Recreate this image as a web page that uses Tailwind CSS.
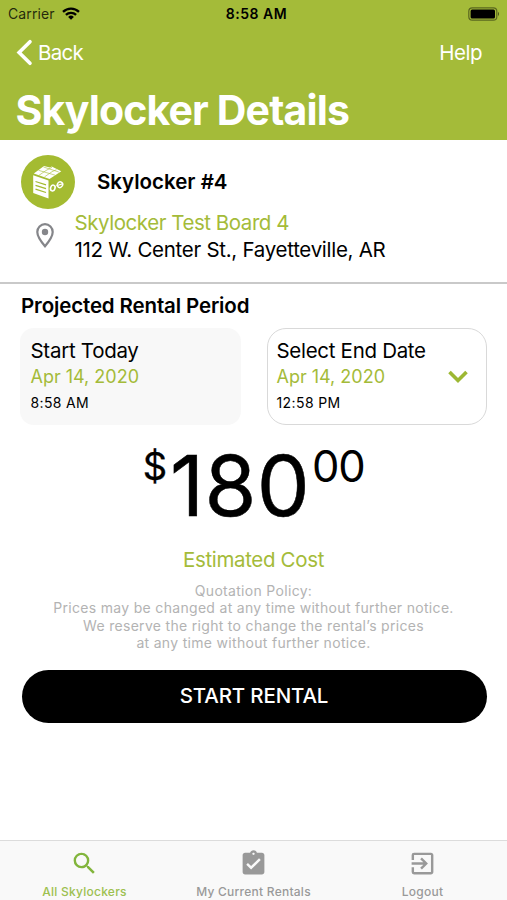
<!DOCTYPE html>
<html lang="en">
<head>
<meta charset="utf-8">
<title>Skylocker Details</title>
<script src="https://cdn.jsdelivr.net/npm/@tailwindcss/browser@4"></script>
</head>
<body class="w-[507px] h-[900px] overflow-hidden bg-white font-['Inter','Liberation_Sans',sans-serif] text-black flex flex-col whitespace-nowrap">
<header class="h-[140px] shrink-0 bg-[#a4bb39] flex flex-col">
  <div class="h-7 shrink-0 grid grid-cols-3 items-center pl-2 pr-[7px]">
    <div class="flex items-center gap-[7px]">
      <span class="text-[14px] leading-7 tracking-[0.1px] text-black/80">Carrier</span>
      <svg class="-mt-[2px]" width="18" height="13" viewBox="0 0 18 13"><g fill="none" stroke="#000" stroke-width="2.3"><path d="M1 4.8a11.5 11.5 0 0 1 16 0"/><path d="M3.9 7.9a7.3 7.3 0 0 1 10.2 0"/></g><path d="M9 12.8 6.1 9.9a4.2 4.2 0 0 1 5.8 0z"/></svg>
    </div>
    <span class="pl-[5px] text-center text-[14px] leading-7 font-semibold tracking-[0.5px]">8:58 AM</span>
    <svg class="justify-self-end -mt-px" width="32" height="14" viewBox="0 0 32 14"><rect x=".8" y=".8" width="28" height="12.4" rx="3.5" fill="none" stroke="#000" stroke-opacity=".45" stroke-width="1.2"/><rect x="2.6" y="2.6" width="24.4" height="8.8" rx="1.5"/><path d="M30 4.8q1.9 2.2 0 4.400z" fill-opacity=".6"/></svg>
  </div>
  <div class="h-[49px] shrink-0 flex items-center justify-between pl-[16px] pr-[25px] text-[20.5px] text-white">
    <div class="flex items-center gap-[5px]">
      <svg width="17" height="27" viewBox="0 0 17 27" fill="none" stroke="#fff" stroke-width="3.6" stroke-linecap="round" stroke-linejoin="miter"><path d="M14 2.700 3.100 13.500 14 24.300"/></svg>
      <span class="pt-[2px] tracking-[-0.7px]">Back</span>
    </div>
    <span class="pt-[2px] tracking-[-0.5px]">Help</span>
  </div>
  <h1 class="shrink-0 pl-[15.500px] pt-[3px] text-[41px] leading-[60px] font-bold text-white tracking-[-0.85px]">Skylocker Details</h1>
</header>
<section class="h-[143.5px] shrink-0 border-b-2 border-[#c9c9c9] pt-[15px] pl-[20.5px]">
  <div class="flex items-center">
    <svg width="54" height="54" viewBox="0 0 54 54"><circle cx="27" cy="27" r="27" fill="#a4bb31"/><g fill="#fff"><path d="M12.200 20.300 27.500 25.500V43.500L12.200 38z"/><path d="M12.800 18.500 23 11l6 1.500 1.700-.9 9.600 4.600L28.500 24z"/></g><g stroke="#a4bb31" fill="none"><path d="m14.500 26.500 10.500 3.400M14.500 30.300l10.500 3.400M14.500 34.100l10.500 3.400" stroke-width="1.300"/><path d="m17.500 15.300 16.400 4.800M22.500 12l15.300 5M18 20.300l7-4.800 6-3.200M23.500 21.900l7.500-5.200 4.500-2" stroke-width=".6"/></g><g fill="none" stroke="#fff"><ellipse cx="31.800" cy="33" rx="2.200" ry="3" stroke-width="1.600" transform="rotate(18 31.800 33)"/><ellipse cx="39" cy="29.700" rx="2.600" ry="2.900" stroke-width="1.400" transform="rotate(35 39 29.700)"/><path d="m35.500 30.800 6.600-2.200" stroke-width="1.200"/></g></svg>
    <h2 class="ml-[22.500px] pt-px text-[20.5px] font-semibold">Skylocker #4</h2>
  </div>
  <div class="flex">
    <svg class="ml-[15.500px] mt-[14px] shrink-0" width="18" height="25" viewBox="0 0 18 25"><path d="M9 1.200a7.700 7.700 0 0 0-7.700 7.700C1.300 14 9 23.200 9 23.200S16.700 14 16.700 8.900A7.700 7.700 0 0 0 9 1.200z" fill="none" stroke="#85868a" stroke-width="2.200"/><circle cx="9" cy="9" r="3.200" fill="#85868a"/></svg>
    <div class="ml-[20.500px] text-[20.5px] leading-[27px]">
      <p class="text-[#a4bb39] tracking-[-0.45px]"><span>Skylocker Test Board 4</span></p>
      <p class="tracking-[-0.28px]"><span>112 W. Center St., Fayetteville, AR</span></p>
    </div>
  </div>
</section>
<main class="grow px-5">
  <h3 class="pl-px pt-[7px] text-[20.5px] leading-[30px] font-semibold tracking-[-0.14px]"><span>Projected Rental Period</span></h3>
  <div class="mt-[7.5px] flex justify-between">
    <div class="w-[221px] h-[97px] rounded-[14px] bg-[#f8f8f8] pl-[10.500px] pt-[10px]">
      <p class="text-[20.5px] leading-[26px] tracking-[-0.28px]"><span>Start Today</span></p>
      <p class="text-[18px] leading-[26px] text-[#a4bb39]"><span>Apr 14, 2020</span></p>
      <p class="text-[14px] leading-[26px] tracking-[0.35px]"><span>8:58 AM</span></p>
    </div>
    <div class="w-[220.500px] h-[97px] rounded-[19px] border-[1.5px] border-[#d9d9d9] pl-[9px] pt-[9px] flex justify-between pr-[18px]">
      <div>
        <p class="text-[20.5px] leading-[26px] tracking-[-0.3px]"><span>Select End Date</span></p>
        <p class="text-[18px] leading-[26px] text-[#a4bb39]"><span>Apr 14, 2020</span></p>
        <p class="text-[14px] leading-[26px] tracking-[0.4px]"><span>12:58 PM</span></p>
      </div>
      <svg class="mt-[32px]" width="20" height="14" viewBox="0 0 20 14" fill="none" stroke="#9db833" stroke-width="3.600"><path d="m1.500 2 8.500 8.500L18.500 2"/></svg>
    </div>
  </div>
  <div class="flex justify-center h-[110px] pt-[16px]">
    <span class="text-[38px] leading-[50px] [-webkit-text-stroke:0.3px_#000]">$</span>
    <span class="ml-[3px] text-[84px] leading-[90px] tracking-[0.300px] [-webkit-text-stroke:0.5px_#000]">180</span>
    <span class="ml-[2px] text-[43.500px] leading-[50px] tracking-[-1.300px]">00</span>
  </div>
  <p class="mt-[10px] text-center text-[20.5px] leading-[30px] text-[#a4bb39] tracking-[-0.34px]"><span>Estimated Cost</span></p>
  <div class="mt-[7px] text-center text-[14px] leading-[17.4px] tracking-[0.31px] text-[#b3b3b3]">
    <p><span>Quotation Policy:</span></p>
    <p><span>Prices may be changed at any time without further notice.</span></p>
    <p><span>We reserve the right to change the rental’s prices</span></p>
    <p><span>at any time without further notice.</span></p>
  </div>
  <button class="mt-[18px] ml-[1.500px] block w-[465px] h-[53px] rounded-full bg-black text-white text-[20.5px] font-medium pt-px tracking-[-0.15px]"><span>START RENTAL</span></button>
</main>
<nav class="h-[60px] shrink-0 border-t border-[#dcdcdc] bg-[#f9f9f9] grid grid-cols-3 text-[12px] font-medium tracking-[0.25px] text-[#999]">
  <div class="flex flex-col items-center pt-[8px] text-[#9dc050]">
    <svg width="29" height="29" viewBox="0 0 24 24" fill="#82b53c"><path d="M15.500 14h-.79l-.28-.27A6.470 6.470 0 0 0 16 9.500 6.500 6.500 0 1 0 9.500 16c1.610 0 3.090-.59 4.230-1.570l.27.28v.79l5 4.990L20.490 19l-4.990-5zm-6 0C7.010 14 5 11.990 5 9.500S7.010 5 9.500 5 14 7.010 14 9.500 11.990 14 9.500 14z"/></svg>
    <span class="mt-[6px] leading-4">All Skylockers</span>
  </div>
  <div class="flex flex-col items-center pt-[8px]">
    <svg width="29" height="29" viewBox="0 0 24 24" fill="#999"><path d="M19 3h-4.180C14.400 1.840 13.300 1 12 1c-1.300 0-2.400.84-2.820 2H5c-1.100 0-2 .9-2 2v14c0 1.100.9 2 2 2h14c1.100 0 2-.9 2-2V5c0-1.100-.9-2-2-2zm-7 0c.55 0 1 .45 1 1s-.45 1-1 1-1-.45-1-1 .45-1 1-1zm-2 14-4-4 1.410-1.410L10 14.170l6.590-6.590L18 9l-8 8z"/></svg>
    <span class="mt-[6px] leading-4">My Current Rentals</span>
  </div>
  <div class="flex flex-col items-center pt-[8px]">
    <svg width="29" height="29" viewBox="0 0 24 24" fill="#999"><path d="M10.090 15.590 11.500 17l5-5-5-5-1.410 1.410L12.670 11H3v2h9.670l-2.580 2.590zM19 3H5a2 2 0 0 0-2 2v4h2V5h14v14H5v-4H3v4a2 2 0 0 0 2 2h14c1.100 0 2-.9 2-2V5c0-1.100-.9-2-2-2z"/></svg>
    <span class="mt-[6px] leading-4">Logout</span>
  </div>
</nav>
</body>
</html>
